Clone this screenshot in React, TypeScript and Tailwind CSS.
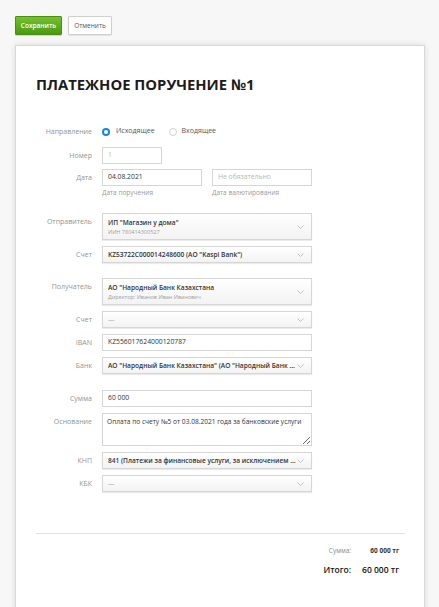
import React from "react";

const font = { fontFamily: "'Open Sans', 'Liberation Sans', sans-serif" };

function Chevron() {
  return (
    <svg width="7" height="4" viewBox="0 0 7 4" className="shrink-0">
      <polyline points="0.5,0.5 3.5,3.5 6.5,0.5" fill="none" stroke="#b5b5b5" strokeWidth="0.8" />
    </svg>
  );
}

function Label({ children }: { children: React.ReactNode }) {
  return (
    <div className="w-[56px] shrink-0 text-right text-[7px] text-[#939393] leading-[17px]">
      {children}
    </div>
  );
}

function Row({ label, children, className = "" }: { label: string; children: React.ReactNode; className?: string }) {
  return (
    <div className={`flex items-start gap-[10px] ${className}`}>
      <Label>{label}</Label>
      {children}
    </div>
  );
}

function TextBox({ value, placeholder, width = "w-[210px]" }: { value?: string; placeholder?: string; width?: string }) {
  return (
    <div className={`${width} h-[17px] border border-[#d6d6d6] bg-white px-[5px] flex items-center text-[6.8px] ${value ? "text-[#333]" : "text-[#b8b8b8]"}`}>
      {value ?? placeholder}
    </div>
  );
}

function SelectBox({ title, sub, muted, bold = true }: { title: string; sub?: string; muted?: boolean; bold?: boolean }) {
  return (
    <div
      className={`w-[210px] ${sub ? "h-[27px]" : "h-[17px]"} border border-[#d6d6d6] bg-gradient-to-b from-white to-[#f3f3f3] shadow-[0_1px_1px_rgba(0,0,0,0.08)] pl-[5px] pr-[7px] flex items-center gap-[1px]`}
    >
      <div className="flex-1 min-w-0 flex flex-col justify-center">
        <div
          className={`text-[6.6px] leading-[10px] whitespace-nowrap overflow-hidden text-ellipsis ${muted ? "text-[#aaa]" : "text-[#333]"} ${bold ? "font-semibold" : ""}`}
        >
          {title}
        </div>
        {sub && <div className="text-[5.5px] leading-[8px] text-[#a0a0a0] whitespace-nowrap">{sub}</div>}
      </div>
      <Chevron />
    </div>
  );
}

export default function App() {
  return (
    <div className="h-[607px] overflow-hidden bg-[#f7f7f7]" style={font}>
      <div className="pl-[15px] pt-[16px]">
        <div className="flex gap-[6px]">
          <button className="w-[47px] h-[19px] rounded-[1px] border border-[#4b9015] bg-gradient-to-b from-[#74c12f] to-[#4c9a12] text-white text-[6.5px] font-semibold shadow-[0_1px_1px_rgba(0,0,0,0.15)]">
            Сохранить
          </button>
          <button className="w-[44px] h-[19px] rounded-[1px] border border-[#cfcfcf] bg-white text-[#555] text-[6.5px] shadow-[0_1px_1px_rgba(0,0,0,0.08)]">
            Отменить
          </button>
        </div>

        <div className="mt-[10px] w-[410px] h-[600px] bg-white border border-[#d8d8d8] shadow-[0_0_6px_rgba(0,0,0,0.12)] pl-[20px] pr-[19px]">
          <h1 className="mt-[28px] text-[14.8px] leading-[20px] font-bold text-[#1b1b1b]">ПЛАТЕЖНОЕ ПОРУЧЕНИЕ №1</h1>

          <Row label="Направление" className="mt-[29px]">
            <div className="h-[17px] flex items-center text-[7px] text-[#555]">
              <span className="w-[8px] h-[8px] rounded-full border-[2.5px] border-[#1787d6] bg-white" />
              <span className="ml-[6px]">Исходящее</span>
              <span className="ml-[14px] w-[8px] h-[8px] rounded-full border border-[#cfcfcf] bg-white" />
              <span className="ml-[5px]">Входящее</span>
            </div>
          </Row>

          <Row label="Номер" className="mt-[7px]">
            <TextBox placeholder="1" width="w-[60px]" />
          </Row>

          <Row label="Дата" className="mt-[5px]">
            <div className="flex gap-[10px]">
              <div>
                <TextBox value="04.08.2021" width="w-[100px]" />
                <div className="mt-[2px] text-[6.5px] leading-[10px] text-[#999]">Дата поручения</div>
              </div>
              <div>
                <TextBox placeholder="Не обязательно" width="w-[100px]" />
                <div className="mt-[2px] text-[6.5px] leading-[10px] text-[#999]">Дата валютирования</div>
              </div>
            </div>
          </Row>

          <Row label="Отправитель" className="mt-[15px]">
            <SelectBox title={'ИП "Магазин у дома"'} sub="ИИН 780414300527" />
          </Row>

          <Row label="Счет" className="mt-[6px]">
            <SelectBox title={'KZ53722C000014248600 (АО "Kaspi Bank")'} />
          </Row>

          <Row label="Получатель" className="mt-[15px]">
            <SelectBox title={'АО "Народный Банк Казахстана'} sub="Директор: Иванов Иван Иванович" />
          </Row>

          <Row label="Счет" className="mt-[6px]">
            <SelectBox title="—" muted bold={false} />
          </Row>

          <Row label="IBAN" className="mt-[6px]">
            <TextBox value="KZ556017624000120787" />
          </Row>

          <Row label="Банк" className="mt-[6px]">
            <SelectBox title={'АО "Народный Банк Казахстана" (АО "Народный Банк Казахстана")'} />
          </Row>

          <Row label="Сумма" className="mt-[16px]">
            <TextBox value="60 000" />
          </Row>

          <Row label="Основание" className="mt-[6px]">
            <textarea
              readOnly
              value="Оплата по счету №5 от 03.08.2021 года за банковские услуги"
              className="w-[210px] h-[33px] border border-[#d6d6d6] bg-white px-[4px] py-[3px] text-[6.6px] leading-[10px] text-[#333] outline-none"
              style={font}
            />
          </Row>

          <Row label="КНП" className="mt-[6px]">
            <SelectBox title="841 (Платежи за финансовые услуги, за исключением платежей за услуги)" />
          </Row>

          <Row label="КБК" className="mt-[6px]">
            <SelectBox title="—" muted bold={false} />
          </Row>

          <div className="mt-[41px] border-t border-[#e2e2e2]" />

          <div className="mt-[12px] flex justify-end items-center pr-[6px] text-[6.5px]">
            <span className="text-[#8a8a8a]">Сумма:</span>
            <span className="ml-[18px] w-[30px] text-right font-bold text-[#333]">60 000 тг</span>
          </div>
          <div className="mt-[8px] flex justify-end items-center pr-[6px] text-[8.5px] font-semibold text-[#111]">
            <span>Итого:</span>
            <span className="ml-[11px]">60 000 тг</span>
          </div>
        </div>
      </div>
    </div>
  );
}
